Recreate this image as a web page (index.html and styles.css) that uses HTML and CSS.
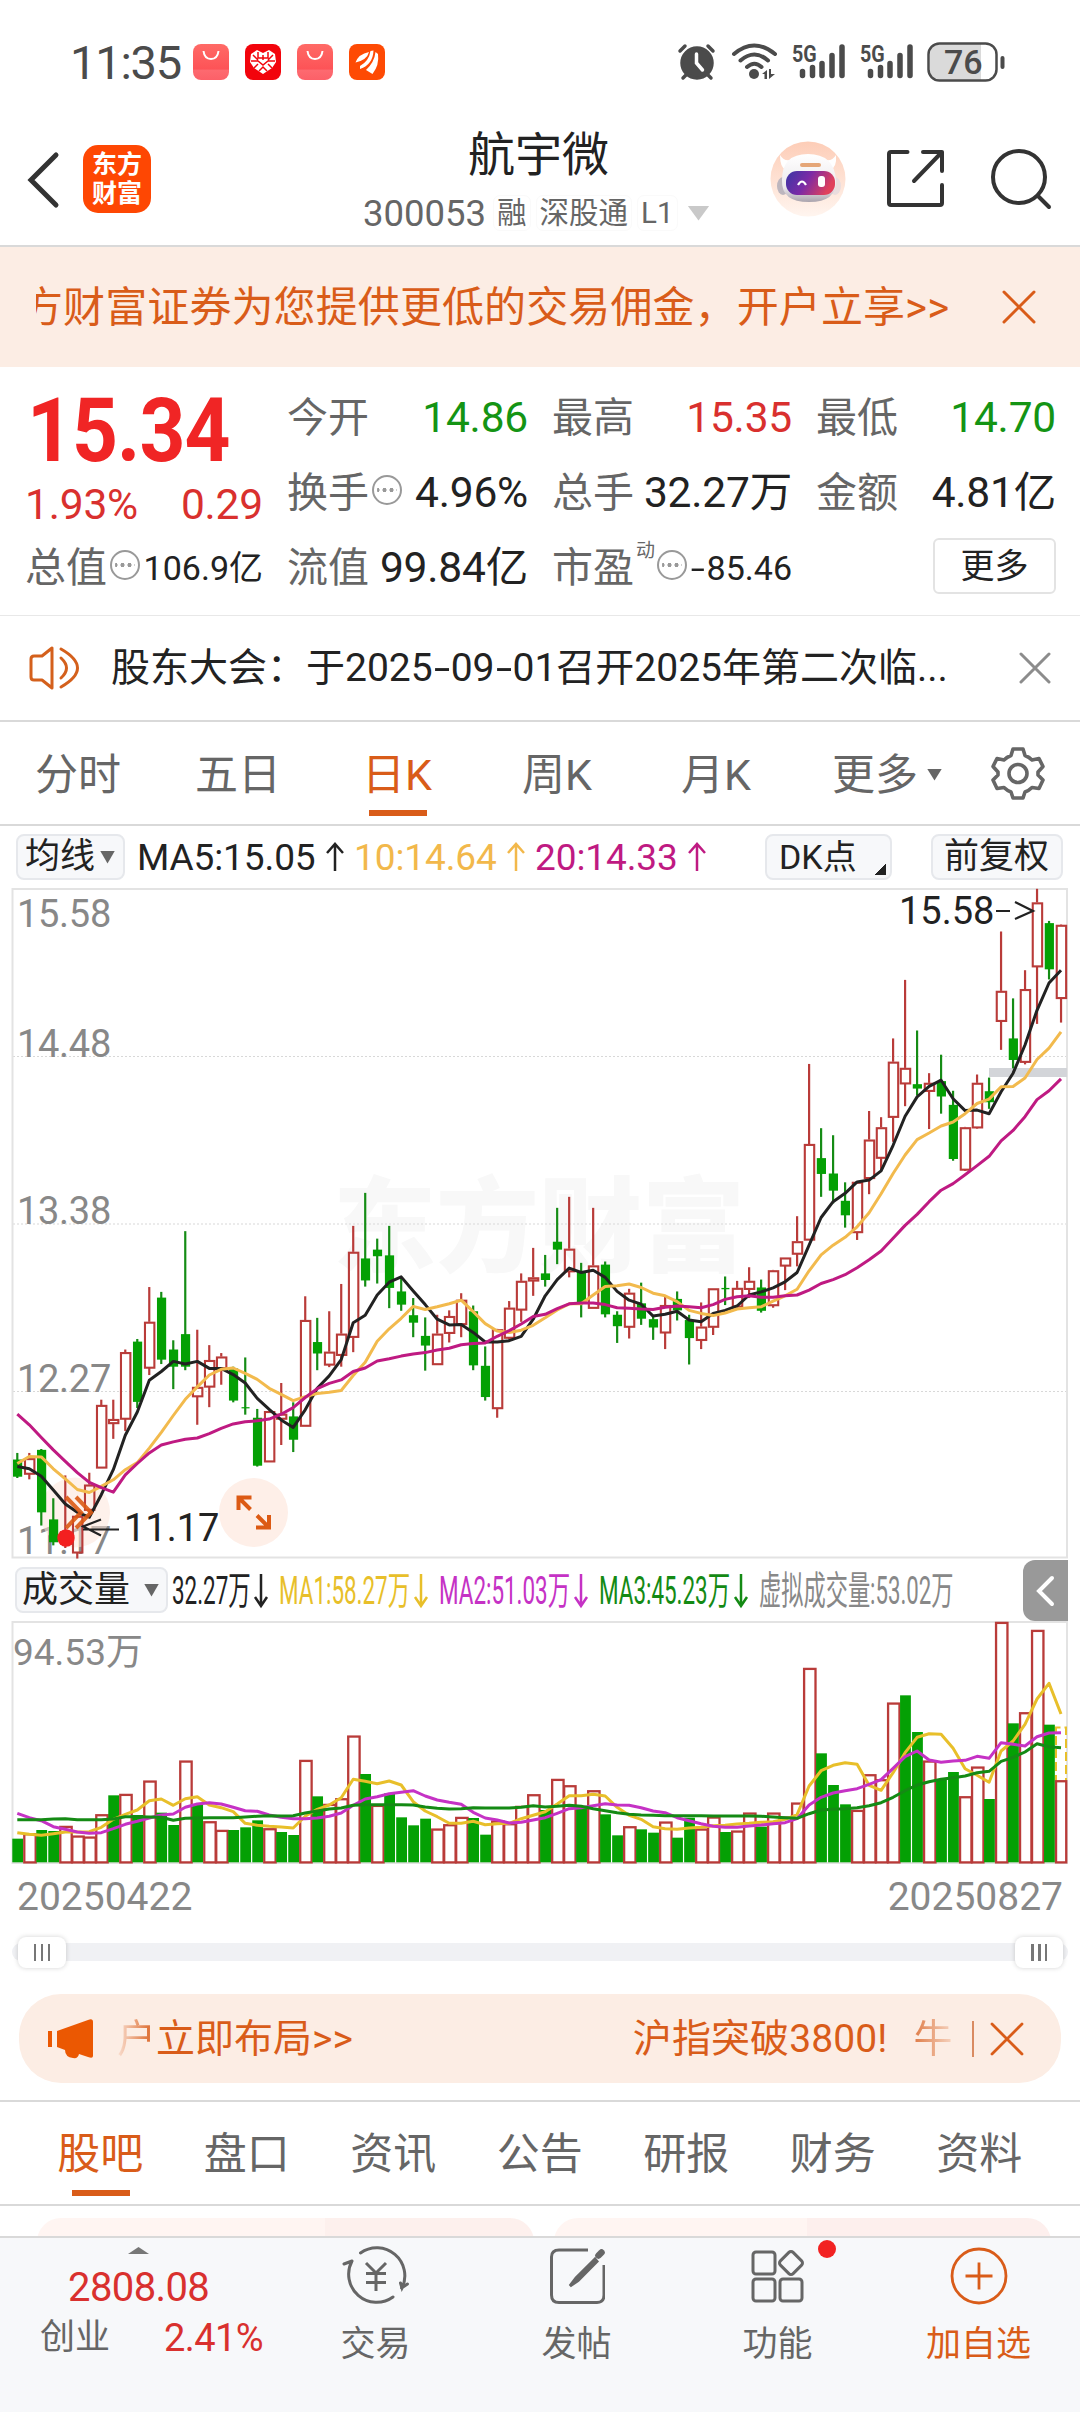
FILE: index.html
```html
<!DOCTYPE html>
<html lang="zh-CN">
<head>
<meta charset="utf-8">
<title>航宇微 300053</title>
<link rel="stylesheet" href="styles.css">
</head>
<body>
<main class="app">
  <div class="status">
    <span class="clock">11:35</span>
    <svg class="status-apps" width="194" height="36" viewBox="0 0 194 36">
      <defs><linearGradient id="bag" x1="0" y1="0" x2="0" y2="1"><stop offset="0" stop-color="#ff6a66"/><stop offset=".7" stop-color="#fd5357"/><stop offset=".72" stop-color="#fd6a70"/><stop offset="1" stop-color="#fc6068"/></linearGradient></defs>
      <rect width="36" height="36" rx="8" fill="url(#bag)"/><path d="M10.500 7q1 8 7.500 8t7.500-8" fill="none" stroke="#fff" stroke-width="2"/>
      <rect x="52" width="36" height="36" rx="8" fill="#f2040c"/>
      <path d="M70 9l6-3 6 4 1 8-4 6-9 6-9-6-4-6 1-8 6-4z" fill="#fff"/>
      <path d="M60 11l5 5M65 8v6h5M75 8v6h-5M80 11l-5 5M58 17h7l5 4 5-4h7M61 24l4-4M79 24l-4-4M66 27l4-4 4 4M70 11v5" fill="none" stroke="#f2040c" stroke-width="1.500"/>
      <rect x="104" width="36" height="36" rx="8" fill="url(#bag)"/><path d="M114.500 7q1 8 7.500 8t7.500-8" fill="none" stroke="#fff" stroke-width="2"/>
      <rect x="156" width="36" height="36" rx="8" fill="#fe4a04"/>
      <path d="M162.500 18.500q3-8.500 13.500-10.500-2 8-13.500 10.500zM167 22q9-5 10.500-15l3-.5q-.500 14-13.500 18.500zM173 26q8.500-8 9.500-18l2.500 2q1.500 11-5.500 20z" fill="#fff"/>
    </svg>
    <svg class="status-system" width="334" height="40" viewBox="0 0 334 40" fill="none" stroke="#4b4b4b">
      <g stroke="#4b4b4b" stroke-width="3.500" stroke-linecap="round">
        <circle cx="21" cy="21" r="15" fill="#4b4b4b"/>
        <path d="M4 9l5-5M37 9l-5-5M7 36l4-4M35 36l-4-4"/>
        <path d="M20.500 12v9l6 7" stroke="#fff"/>
      </g>
      <g stroke-width="4" stroke-linecap="round"><path d="M58 12q20-17 41 0M64.500 18.500q14-12 27.500 0M71 25q7.500-6.500 14.500 0"/></g>
      <circle cx="78" cy="32" r="5" fill="#4b4b4b" stroke="none"/>
      <path d="M86 32l5-4v9h-2.500v-5zM93 27v10l6-5h-4v-5z" fill="#4b4b4b" stroke="none"/>
      <g stroke-width="5.500" stroke-linecap="round"><path d="M126.500 29.500v4M136.500 25.500v8M146 21.500v12M156 13.500v20M166 5v28.500"/></g>
      <g stroke-width="5.500" stroke-linecap="round"><path d="M194.500 29.500v4M204.500 25.500v8M214 21.500v12M224 13.500v20M234 5v28.500"/></g>
      <g fill="#4b4b4b" stroke="none" class="net"><text transform="translate(116 19.500) scale(.82 1)">5G</text><text transform="translate(184 19.500) scale(.82 1)">5G</text></g>
      <path d="M264 2h41v36h-41q-10 0-10-10v-16q0-10 10-10z" fill="#dadada" stroke="none"/>
      <rect x="252.500" y="1.500" width="68" height="37" rx="11" stroke-width="2.500"/>
      <path d="M326.500 16v9" stroke-width="4" stroke-linecap="round"/>
      <text x="268" y="32" class="charge">76</text>
    </svg>
  </div>

  <header class="header">
    <svg class="back" width="36" height="58" viewBox="0 0 36 58" fill="none" stroke="#333" stroke-width="5" stroke-linecap="round"><path d="M31 4L6 29l25 25"/></svg>
    <div class="logo"><span>东方</span><span>财富</span></div>
    <div class="stock">
      <h1>航宇微</h1>
      <div class="stock-meta"><span class="code">300053</span><span class="tag">融</span><span class="tag">深股通</span><span class="tag">L1</span><i class="caret"></i></div>
    </div>
    <svg class="avatar" width="76" height="76" viewBox="0 0 76 76">
      <defs>
        <linearGradient id="halo" x1="0" y1="0" x2="0" y2="1"><stop offset="0" stop-color="#fdcdb7"/><stop offset="1" stop-color="#fff5ef"/></linearGradient>
        <linearGradient id="shell" x1="0" y1="0" x2="0" y2="1"><stop offset="0" stop-color="#fff"/><stop offset=".7" stop-color="#ece9ec"/><stop offset="1" stop-color="#aaa3ad"/></linearGradient>
        <linearGradient id="visor" x1="0" y1="0" x2="1" y2=".3"><stop offset="0" stop-color="#3a35a5"/><stop offset=".5" stop-color="#7b2aa6"/><stop offset="1" stop-color="#e0405c"/></linearGradient>
      </defs>
      <circle cx="38" cy="38" r="37.500" fill="url(#halo)"/>
      <path d="M10 14q5 8 13 4l-7 11q-6-2-6-15zM66 14q-5 8-13 4l7 11q7-2 6-15z" fill="#fff"/>
      <ellipse cx="13" cy="45" rx="6" ry="9" fill="#bdb6be"/><ellipse cx="65" cy="45" rx="6" ry="9" fill="#eaddde"/>
      <path d="M38 13q26 0 28 26 1 22-27 22T12 39q0-26 26-26z" fill="url(#shell)"/>
      <rect x="30" y="22" width="21" height="4" rx="2" fill="#e5a678"/>
      <rect x="16" y="30" width="49" height="24" rx="11" fill="url(#visor)"/>
      <path d="M28 44q4-7 8 0" fill="none" stroke="#fff" stroke-width="2.200"/><rect x="48" y="35" width="7" height="11" rx="3" fill="#fff"/>
    </svg>
    <svg class="share" width="60" height="60" viewBox="0 0 60 60" fill="none" stroke="#333" stroke-width="4" stroke-linecap="round" stroke-linejoin="round"><path d="M21.500 3H5q-2 0-2 2v49q0 2 2 2h49q2 0 2-2V36M37 3h19v19M56 3L28 32"/></svg>
    <svg class="search" width="62" height="62" viewBox="0 0 62 62" fill="none" stroke="#333" stroke-width="4" stroke-linecap="round"><circle cx="29" cy="29" r="26"/><path d="M48 48l11 11"/></svg>
  </header>

  <div class="banner">
    <div class="banner-text"><span>方财富证券为您提供更低的交易佣金，开户立享&gt;&gt;</span></div>
    <svg width="34" height="34" viewBox="0 0 34 34" stroke="#d95c19" stroke-width="3" stroke-linecap="round"><path d="M2 2l30 30M32 2L2 32"/></svg>
  </div>

  <section class="quote">
    <div class="price-cell"><span class="price">15.34</span></div>
    <div class="cell"><span>今开</span><b class="green">14.86</b></div>
    <div class="cell"><span>最高</span><b class="red">15.35</b></div>
    <div class="cell"><span>最低</span><b class="green">14.70</b></div>

    <div class="cell change"><b class="red">1.93%</b><b class="red">0.29</b></div>
    <div class="cell"><span>换手</span><i class="info"></i><b>4.96%</b></div>
    <div class="cell"><span>总手</span><b>32.27万</b></div>
    <div class="cell"><span>金额</span><b>4.81亿</b></div>

    <div class="cell"><span>总值</span><i class="info"></i><b class="small">106.9亿</b></div>
    <div class="cell"><span>流值</span><b>99.84亿</b></div>
    <div class="cell"><span>市盈<sup>动</sup></span><i class="info dyn"></i><b class="small"><u>-</u>85.46</b></div>
    <div class="cell"><button class="more">更多</button></div>
  </section>

  <div class="notice">
    <svg width="52" height="46" viewBox="0 0 52 46" fill="none" stroke="#d4601c" stroke-width="3" stroke-linejoin="round" stroke-linecap="round"><path d="M23 3v40l-10-8H5q-3 0-3-3V14q0-3 3-3h8z"/><path d="M32 13q11 10 0 20M32 4q33 19 0 38"/></svg>
    <p>股东大会：于2025<u>-</u>09<u>-</u>01召开2025年第二次临...</p>
    <svg width="32" height="32" viewBox="0 0 32 32" stroke="#8c8c8c" stroke-width="3" stroke-linecap="round"><path d="M2 2l28 28M30 2L2 30"/></svg>
  </div>

  <nav class="periods">
    <a>分时</a><a>五日</a><a class="active">日K</a><a>周K</a><a>月K</a><a>更多<i class="caret dark"></i></a>
    <svg width="54" height="54" viewBox="0 0 54 54" fill="none" stroke="#666" stroke-width="3.600" stroke-linejoin="round"><path d="M22 3h10l2 6.500q4 1.500 7 4.500l7-1.500 4 8-5 5.500v3l5 5-4 8.500-7-1q-3 3-7 4.500L32 52H22l-2-6q-4-1.500-7-4.500l-7 1L2 34l5-5v-3l-5-5.500 4-8 7 1.500q3-3 7-4.500z"/><circle cx="27" cy="27.500" r="9"/></svg>
  </nav>

  <div class="averages">
    <button class="chip ma">均线<i class="caret dark"></i></button>
    <span class="avg">MA5:15.05<svg width="20" height="30" viewBox="0 0 20 30"><path d="M10 29V2M2 11l8-9 8 9"/></svg></span>
    <span class="avg yellow">10:14.64<svg width="20" height="30" viewBox="0 0 20 30"><path d="M10 29V2M2 11l8-9 8 9"/></svg></span>
    <span class="avg pink">20:14.33<svg width="20" height="30" viewBox="0 0 20 30"><path d="M10 29V2M2 11l8-9 8 9"/></svg></span>
    <button class="chip dk">DK点</button>
    <button class="chip adj">前复权</button>
  </div>

  <svg class="chart" id="price" width="1080" height="671" viewBox="0 888 1080 671">
    <text class="watermark" x="333" y="1264">东方财富</text>
    <path class="grid" d="M13 1056.500H1067M13 1224H1067M13 1391.500H1067"/>
    <path class="frame" d="M12.500 889H1067V1557.500H12.500z"/>
    <g class="scale"><text x="17" y="927">15.58</text><text x="17" y="1057">14.48</text><text x="17" y="1224">13.38</text><text x="17" y="1392">12.27</text><text x="17" y="1554">11.17</text></g>
    <rect x="989" y="1068" width="78" height="9" fill="#d3d5d9"/>
    <circle cx="75" cy="1512.500" r="35" fill="#fde6db" opacity=".55"/>
    <g id="candles"></g>
    <g id="price-lines"></g>
    <circle cx="66" cy="1538" r="8.700" fill="#f32020"/>
    <path class="hint" d="M66 1497l15 15.500-15 15.500M76 1497l15 15.500-15 15.500" stroke-opacity=".9"/>
    <path d="M119 1529.500H83M101 1519.500l-18 7 18 9" fill="none" stroke="#222" stroke-width="2.200"/>
    <text class="mark" x="124" y="1540.500">11.17</text>
    <text class="mark" x="899" y="924">15.58</text>
    <path d="M996 911h14M1015 902l18 9-18 8" fill="none" stroke="#222" stroke-width="2.200"/>
    <circle cx="253.500" cy="1512.500" r="34.500" fill="#feefe8"/>
    <path class="hint" d="M238.500 1510v-12.500h13M238.500 1497.500l12 12M269 1515v12.500h-13M269 1527.500l-12-12"/>
  </svg>

  <div class="volume-bar">
    <button class="chip vol">成交量<i class="caret dark"></i></button>
    <svg class="volume-legend" width="790" height="50" viewBox="0 0 790 50">
      <g fill="#222" stroke="#222"><text transform="translate(3 39) scale(.575 1)">32.27万</text><path d="M92 9v32M86 32l6 9 6-9"/></g>
      <g fill="#e8bf2a" stroke="#e8bf2a"><text transform="translate(110 39) scale(.575 1)">MA1:58.27万</text><path d="M252 9v32M246 32l6 9 6-9"/></g>
      <g fill="#c532c5" stroke="#c532c5"><text transform="translate(270 39) scale(.575 1)">MA2:51.03万</text><path d="M412 9v32M406 32l6 9 6-9"/></g>
      <g fill="#148a14" stroke="#148a14"><text transform="translate(430 39) scale(.575 1)">MA3:45.23万</text><path d="M572 9v32M566 32l6 9 6-9"/></g>
      <g fill="#888"><text transform="translate(590 39) scale(.57 1)">虚拟成交量:53.02万</text></g>
    </svg>
    <button class="collapse"><svg width="45" height="61" viewBox="0 0 45 61" fill="none" stroke="#fff" stroke-width="4" stroke-linecap="round"><path d="M29 18L16 31l13 13"/></svg></button>
  </div>

  <svg class="chart" id="volume" width="1080" height="243" viewBox="0 1621 1080 243">
    <path class="frame" d="M12.500 1622H1067V1863H12.500z"/>
    <text class="volume-max" x="13" y="1665">94.53万</text>
    <g id="bars-volume"></g>
    <path d="M1056 1862V1727.500H1066V1862" fill="none" stroke="#e8bf2a" stroke-width="2" stroke-dasharray="9 4"/>
    <g id="volume-last"></g>
    <g id="volume-lines"></g>
  </svg>

  <div class="dates"><span>20250422</span><span>20250827</span></div>
  <div class="range"><i class="handle"></i><i class="handle"></i></div>

  <div class="promo">
    <svg width="46" height="40" viewBox="0 0 46 40" fill="#eb5802"><path d="M0 12h4v16H0zM9 12L40 1q5-2 5 2v34q0 3-5 1l-9-3q-1 5-6 4-8-1-8-8l-8-3z"/></svg>
    <div class="ticker"><span class="fade-left">户</span><span>立即布局&gt;&gt;</span><span class="next">沪指突破3800!</span><span class="fade-right">牛</span></div>
    <i class="bar"></i>
    <svg width="34" height="34" viewBox="0 0 34 34" stroke="#d95c19" stroke-width="2.800" stroke-linecap="round"><path d="M2 2l30 30M32 2L2 32"/></svg>
  </div>

  <nav class="sections"><a class="active">股吧</a><a>盘口</a><a>资讯</a><a>公告</a><a>研报</a><a>财务</a><a>资料</a></nav>
  <div class="cards"><i></i><i></i></div>

  <footer class="bottom">
    <div class="index"><i class="up"></i><b>2808.08</b><div><span>创业</span><em>2.41%</em></div></div>
    <a><svg width="68" height="60" viewBox="0 0 68 60" fill="none" stroke="#666" stroke-width="3" stroke-linecap="round"><path d="M18.500 7a28 28 0 0 1 41.500 35l-1.500-5M59.500 42l6-4M51 51A28 28 0 0 1 10 15M2 18l8-3"/><path d="M24 17l10 10 10-10M24 27.500h20M24 36.500h20M34 27v18" stroke-linecap="butt"/></svg>交易</a>
    <a><svg width="56" height="60" viewBox="0 0 56 60" fill="none" stroke="#666" stroke-width="3"><path d="M39 4H10Q2.500 4 2.500 11v38q0 7.500 7.500 7.500h38q7 0 7-7.500V19"/><path d="M46 13L27 32l-6 8 8-5.500 19-19z" fill="#666"/><path d="M49.500 9.500l3-3" stroke-width="6.500" stroke-linecap="round"/></svg>发帖</a>
    <a class="dotted"><svg width="56" height="60" viewBox="0 0 56 60" fill="none" stroke="#666" stroke-width="3"><rect x="3" y="6" width="22" height="22" rx="3"/><rect x="3" y="33" width="22" height="22" rx="3"/><rect x="30" y="33" width="22" height="22" rx="3"/><rect x="32" y="8" width="18" height="18" rx="3" transform="rotate(45 41 17)"/></svg>功能</a>
    <a class="active"><svg width="60" height="60" viewBox="0 0 60 60" fill="none" stroke="#d95c19" stroke-width="2.800"><circle cx="30" cy="30" r="27"/><path d="M30 16.500v27M16.500 30h27"/></svg>加自选</a>
  </footer>
</main>
<script src="chart.js"></script>
</body>
</html>
```
FILE: styles.css
```css
* { box-sizing: border-box; }
body { margin: 0; background: #fff; color: #222; font-family: Roboto, "Noto Sans CJK SC", sans-serif; }
h1, p { margin: 0; font-weight: 400; }
b, i, em, u { font-weight: 400; font-style: normal; text-decoration: none; }
button { font: inherit; color: inherit; padding: 0; border: 0; }
svg { display: block; flex: none; }
.app { width: 1080px; height: 2412px; overflow: hidden; display: flex; flex-direction: column; }
.app > * { flex: none; }
.caret { display: block; width: 22px; height: 15px; background: #c9c9c9; clip-path: polygon(0 0, 100% 0, 50% 100%); }
.caret.dark { width: 15px; height: 13px; background: #666; }

.status { height: 125px; display: flex; align-items: flex-start; padding: 0 70px 0 70px; }
.clock { width: 123px; margin-top: 35px; line-height: 56px; font-size: 47px; letter-spacing: -1.200px; color: #4b4b4b; }
.status-apps { margin-top: 44px; }
.status-system { margin: 42px 0 0 auto; }
.net { font-weight: 700; font-size: 24px; }
.charge { font-weight: 500; font-size: 34px; fill: #4b4b4b; stroke: none; }

.header { height: 122px; border-bottom: 2px solid #d9d9d9; display: grid; grid-template-columns: 83px 68px 619px 116px 104px auto; }
.back { margin: 26px 0 0 25px; }
.logo { width: 68px; height: 68px; margin-top: 20px; border-radius: 15px; background: #fe4703; color: #fff; font-size: 25px; font-weight: 700; line-height: 29px; display: flex; flex-direction: column; align-items: center; justify-content: center; }
.stock { padding-left: 212px; }
.stock h1 { margin: -2px 0 0 105px; font-size: 47px; line-height: 64px; }
.stock-meta { display: flex; align-items: center; height: 40px; margin-top: 6px; color: #666; white-space: nowrap; }
.code { font-size: 36.500px; width: 130px; }
.tag { font-size: 29.500px; line-height: 34px; padding: 0 3px; margin-right: 5px; border-radius: 7px; border: 1px solid #fafafa; }
.stock-meta .caret { margin-left: 5px; }
.avatar { margin-top: 16px; }
.share { margin-top: 24px; }
.search { margin-top: 23px; }

.banner { height: 120px; background: #fcede4; display: flex; align-items: center; padding: 0 44px 0 36px; color: #d95c19; }
.banner-text { flex: 1; overflow: hidden; white-space: nowrap; font-size: 42px; line-height: 70px; letter-spacing: .1px; padding-top: 2px; }
.banner-text span { display: block; margin-left: -15px; }

.quote { height: 249px; border-bottom: 1px solid #e8e8e8; display: grid; grid-template-columns: 236px 239px 238px 238px; column-gap: 26px; grid-template-rows: 75px 75px 75px; padding: 13px 0 0 27px; }
.cell { display: flex; align-items: center; font-size: 41px; line-height: 60px; white-space: nowrap; color: #666; }
.cell span { margin-left: -2px; }
.cell b { margin-left: auto; letter-spacing: -.2px; font-size: 42.500px; color: #222; }
.cell b.red { color: #d9302e; }
.cell b.green { color: #149414; }
.cell b.small { font-size: 34px; letter-spacing: 0; }
.cell u { display: inline-block; transform: scaleX(1.500); width: 13px; }
.change { padding-top: 24px; }
.change b:first-child { margin-left: -2px; }
.price { display: block; font-size: 89px; font-weight: 700; color: #f02525; line-height: 100px; transform: scaleX(.9); transform-origin: 0 0; margin-top: 1px; letter-spacing: -1px; }
.info { width: 30px; height: 30px; border: 2px solid #999; border-radius: 50%; margin: -6px 0 0 3px; background: radial-gradient(circle, #999 1.8px, transparent 2.3px) 0 0 / 7px 100%; background-clip: content-box; padding: 0 3px; }
.cell sup { font-size: 19px; line-height: 20px; display: inline-block; vertical-align: 25px; margin-left: 2px; }
.info.dyn { margin-left: 2px; }
.more { width: 125px; height: 56px; margin-left: 115px; margin-top: -3px; border: 2px solid #e3e3e3; border-radius: 6px; background: #fff; color: #222; font-size: 34px; line-height: 50px; }

.notice { height: 106px; border-bottom: 2px solid #d9d9d9; display: flex; align-items: center; padding: 0 29px; }
.notice p { margin-left: 30px; font-size: 39px; line-height: 60px; white-space: nowrap; }
.notice u { display: inline-block; width: 18px; text-align: center; transform: scaleX(1.5); }
.notice svg:last-child { margin-left: auto; }

.periods { height: 104px; border-bottom: 2px solid #d9d9d9; display: flex; align-items: center; padding-left: 35px; color: #666; font-size: 43px; line-height: 102px; }
.periods a { height: 102px; padding-top: 3px; display: flex; align-items: center; }
.periods a:nth-child(1) { width: 160px; }
.periods a:nth-child(2) { width: 167px; }
.periods a:nth-child(3) { width: 160px; }
.periods a:nth-child(4) { width: 159px; }
.periods a:nth-child(5) { width: 151px; }
.periods a:nth-child(6) { width: 159px; }
.periods a.active { color: #d95c19; background: linear-gradient(#d95c19, #d95c19) 7px 88px / 58px 6px no-repeat; }
.periods .caret { margin-left: 9px; width: 15px; height: 12px; }

.averages { height: 62px; display: flex; align-items: center; padding-left: 16px; font-size: 37px; white-space: nowrap; }
.chip { display: flex; align-items: center; height: 46px; border: 2px solid #e6e8ec; border-radius: 8px; background: #f7f8fa; font-size: 35px; line-height: 42px; color: #222; }
.chip.ma { width: 109px; padding-left: 7px; margin-right: 12px; }
.chip .caret { margin-left: 5px; }
.avg { display: flex; align-items: center; letter-spacing: -.1px; width: 217px; }
.avg svg { margin-left: 9px; fill: none; stroke: #222; stroke-width: 2.500; }
.avg.yellow { color: #f2b84b; width: 181px; }
.avg.yellow svg { stroke: #f2b84b; }
.avg.pink { color: #bf1a82; width: 230px; }
.avg.pink svg { stroke: #bf1a82; }
.chip.dk { width: 127px; padding-left: 12px; font-size: 34px; background: linear-gradient(135deg, transparent 50%, #222 52%) 107px 27px / 12px 12px no-repeat, #f7f8fa; }
.chip.adj { width: 132px; margin-left: 39px; padding-left: 11px; }

.chart text { font-family: Roboto, "Noto Sans CJK SC", sans-serif; }
.frame { fill: none; stroke: #e3e3e3; stroke-width: 2; }
.grid { fill: none; stroke: #d8d8d8; stroke-width: 1.200; stroke-dasharray: 2 2; }
.chart .watermark { font: 900 103px "Noto Sans CJK SC", sans-serif; fill: #f8f8f8; }
.scale { font-size: 38px; fill: #888; letter-spacing: -.3px; }
.mark { font-size: 38px; fill: #222; }
.hint { fill: none; stroke: #dc5a14; stroke-width: 4; }
.volume-max { font-size: 37px; fill: #888; }
.line { fill: none; stroke-width: 3; stroke-linejoin: round; }
.up-bar { fill: #fff; stroke: #b93b39; stroke-width: 2.300; }
.up-body { fill: none; stroke: #b93b39; stroke-width: 2.100; }
.down-bar { fill: #04a004; }

.volume-bar { height: 62px; display: flex; padding-left: 15px; }
.chip.vol { width: 153px; margin-top: 8px; padding-left: 5px; font-size: 36px; }
.chip.vol .caret { margin-left: 14px; }
.volume-legend { margin: 6px 0 0 1px; }
.volume-legend g { stroke-width: 2.500; }
.volume-legend text { font-size: 39px; stroke: none; }
.volume-legend path { fill: none; }
.collapse { width: 45px; height: 61px; margin: 1px 12px 0 auto; background: #999; border-radius: 12px 0 0 12px; }

.dates { height: 70px; display: flex; justify-content: space-between; padding: 3px 17px 0 17px; font-size: 39px; line-height: 60px; color: #888; }
.range { height: 18px; margin: 9px 12px 0; border-radius: 9px; background: #f0f1f4; display: flex; align-items: center; justify-content: space-between; padding: 0 5px 0 6px; }
.handle { width: 48px; height: 31px; border-radius: 8px; background: repeating-linear-gradient(90deg, #777 0 2.500px, transparent 2.500px 7px) 16px 7px / 17px 17px no-repeat, #fff; box-shadow: 0 0 5px rgba(0, 0, 0, .18); }
.promo { height: 89px; margin: 33px 19px 0; border-radius: 42px; background: #fcede4; display: flex; align-items: center; padding: 0 37px 0 29px; color: #d95c19; }
.ticker { flex: 1; display: flex; font-size: 39px; line-height: 60px; margin-left: 23px; white-space: nowrap; }
.fade-left { background: linear-gradient(90deg, #fae0d2, #d95c19); -webkit-background-clip: text; color: transparent; }
.next { margin-left: 280px; letter-spacing: .1px; }
.fade-right { margin-left: 26px; background: linear-gradient(90deg, #de7a45, #f6d3bf); -webkit-background-clip: text; color: transparent; }
.bar { width: 2px; height: 36px; background: #d98b62; margin-right: 16px; }

.sections { height: 106px; margin-top: 17px; border-top: 2px solid #d9d9d9; border-bottom: 2px solid #d9d9d9; display: flex; padding-left: 27px; font-size: 43px; line-height: 105px; color: #666; }
.sections a { width: 146.500px; text-align: center; }
.sections a.active { color: #d95c19; background: linear-gradient(#d95c19, #d95c19) 45px 88px / 58px 6px no-repeat; }
.cards { height: 30px; padding: 12px 29px 0 37px; display: flex; gap: 20px; overflow: hidden; }
.cards i { width: 497px; height: 60px; border-radius: 24px; background: linear-gradient(90deg, #fff5f2 0 58%, #fdf0ed 58%); }
.cards i + i { background: linear-gradient(90deg, #fff5f2 0 51%, #fdefed 51%); }

.bottom { height: 177px; border-top: 2px solid #d9d9d9; background: #f7f8fa; display: grid; grid-template-columns: 275px repeat(4, 201px); font-size: 35px; line-height: 50px; color: #666; }
.bottom a { display: flex; flex-direction: column; align-items: center; padding-top: 8px; gap: 14px; position: relative; }
.bottom a.active { color: #d95c19; }
.dotted::after { content: ""; position: absolute; left: 141px; top: 2px; width: 18px; height: 18px; border-radius: 50%; background: #f22222; }
.index { color: #d9302e; }
.up { display: block; width: 21px; height: 7px; margin: 9px 0 0 128px; background: #777; clip-path: polygon(50% 0, 100% 100%, 0 100%); }
.index b { display: block; margin: 9px 0 0 68px; font-size: 40px; line-height: 50px; letter-spacing: -.6px; }
.index div { display: flex; justify-content: space-between; padding: 0 12px 0 40px; }
.index span { color: #666; }
.index em { font-size: 38px; letter-spacing: -.6px; }
```
FILE: chart.js
```js
// Price series are kept in chart units below the top edge; UNIT turns one unit into pixels.
const STEP = 11.997, FIRST = 17.3, TOP = 880, UNIT = 1 / 2.2725;
const px = i => FIRST + STEP * i;
const py = v => TOP + v * UNIT;
const vy = v => 1550 + v / 3;

// direction, high, body top, body bottom, low
const candles = `G 1302 1317 1356 1359|R 1302 1314 1350 1362|G 1293 1295 1437 1467|G 1405 1453 1505 1512|R 1353 1480 1505 1518|R 1443 1445 1529 1542|R 1347 1374 1432 1450|R 1181 1193 1336 1336|R 1181 1225 1235 1270|R 1067 1073 1225 1252|G 1043 1049 1186 1200|R 925 1004 1109 1125|G 936 949 1090 1100|G 1046 1067 1106 1157|G 798 1032 1106 1114|R 1022 1152 1174 1238|R 1057 1091 1152 1198|R 1075 1083 1110 1147|G 1106 1110 1183 1187|G 1085 1198 1200 1215|G 1202 1222 1331 1333|R 1206 1207 1322 1322|R 1143 1213 1225 1284|G 1187 1219 1272 1300|R 946 1000 1241 1241|G 995 1050 1076 1114|R 980 1072 1102 1107|R 918 1031 1080 1106|R 786 845 1039 1073|G 711 860 910 924|G 815 840 855 917|G 786 853 927 973|G 905 935 965 979|G 950 989 1006 1039|G 994 1036 1058 1115|R 988 1031 1101 1101|R 978 991 1030 1051|R 939 954 1010 1039|G 967 980 1103 1114|G 1060 1104 1175 1183|R 1020 1021 1201 1222|R 957 972 1041 1045|R 894 911 977 1004|R 836 903 911 945|G 852 894 909 924|G 745 822 840 873|R 720 838 890 903|G 870 890 962 994|R 745 876 973 973|G 867 874 987 994|G 980 988 1014 1052|R 929 938 1016 1042|G 915 962 997 1011|G 990 998 1017 1045|R 945 966 1029 1066|G 935 952 978 1001|G 988 1000 1041 1101|R 960 1015 1046 1066|R 928 928 1016 1034|G 901 927 930 966|R 911 927 970 972|R 880 911 930 950|G 908 926 979 983|R 886 887 967 972|R 858 858 877 932|R 764 821 850 878|R 418 600 818 818|G 564 632 668 720|G 580 667 706 735|G 687 729 762 790|R 685 686 801 818|R 525 590 678 714|R 539 562 632 660|R 360 413 539 595|R 227 427 463 514|G 342 464 474 490|R 439 461 480 566|G 397 457 492 531|G 479 511 634 638|R 561 562 659 661|R 442 461 563 565|G 449 480 505 520|R 117 252 321 386|G 269 360 409 428|R 205 248 414 419|R 20 51 197 327|G 93 98 203 226|R 101 102 269 324`
  .split('|').map(s => s.split(' '));

const ma5 = [1333,1338,1355,1386,1418,1437,1448,1397,1340,1262,1209,1137,1117,1094,1100,1094,1110,1110,1124,1143,1178,1203,1227,1244,1204,1155,1127,1090,1006,989,943,914,902,934,965,998,1011,1010,1028,1050,1050,1047,1037,998,945,908,882,892,887,903,935,955,964,991,987,980,1000,1004,985,978,968,943,936,927,913,892,830,767,731,712,686,682,661,603,537,493,469,455,497,524,523,531,481,439,375,296,234,205];
const ma10 = [1326,1310,1311,1338,1361,1385,1392,1378,1363,1340,1324,1291,1255,1217,1180,1152,1125,1112,1109,1121,1135,1155,1169,1183,1174,1167,1164,1160,1126,1096,1048,1020,996,969,976,970,963,955,981,1008,1025,1028,1023,1012,995,977,963,963,943,924,922,918,926,939,945,958,978,985,990,984,975,972,970,957,945,930,888,852,830,812,788,756,713,667,625,590,575,559,550,531,508,498,470,469,450,408,382,345];
const ma20 = [1214,1238,1267,1295,1321,1347,1369,1381,1391,1352,1326,1302,1284,1277,1271,1268,1258,1246,1236,1231,1229,1225,1214,1199,1176,1156,1144,1136,1117,1109,1093,1088,1082,1077,1074,1068,1064,1056,1053,1052,1037,1024,1009,992,987,974,963,961,961,965,972,973,975,976,971,968,970,972,965,953,947,945,948,948,945,943,932,917,908,897,881,863,843,814,785,760,731,705,690,670,649,628,593,569,538,499,479,452];

const volumes = `G866 R850 G840 G843 R828 R857 R860 R793 G736 R732 G795 R692 G788 G825 R632 G765 R814 R840 G840 G832 G811 R835 G846 G855 R630 G739 R762 R745 R557 G672 R765 G730 G802 G826 G806 R836 R823 R801 G804 G854 R812 R820 R768 R733 G780 R687 R706 G770 R721 G793 G856 R829 G838 G848 R815 G863 G803 R836 R800 G846 R842 R788 G830 R788 R800 R758 R354 G610 G705 G763 R780 R673 R688 R458 G436 G546 R632 G688 G666 R739 R650 G747 R216 G520 R487 R240 G524 R691`.split(' ');
const vma1 = [848,853,856,851,846,846,845,832,808,793,780,752,747,766,746,740,765,773,785,820,826,829,831,834,799,778,765,743,688,694,701,693,705,755,783,800,820,820,814,824,821,820,806,796,785,762,737,737,733,738,772,796,808,830,836,838,834,832,827,826,822,820,817,815,808,794,708,662,646,638,643,706,721,668,608,562,551,553,595,656,676,697,603,573,523,447,400,492];
const vma2 = [790,803,812,830,838,846,850,848,836,823,814,804,795,792,772,762,758,762,772,782,784,795,802,806,806,804,799,789,766,747,740,731,727,722,738,750,757,763,787,804,810,819,817,810,803,790,776,773,767,761,765,766,773,783,788,803,812,821,829,832,832,828,825,821,818,806,765,742,729,722,716,703,689,655,620,603,630,637,633,631,619,625,578,583,588,560,549,548];
const vma3 = [809,809,809,807,806,809,809,809,807,800,800,801,802,811,805,804,803,803,803,801,799,797,798,797,789,783,777,774,766,764,764,764,764,765,771,775,777,776,773,774,774,774,772,767,771,769,766,769,776,782,788,793,795,796,797,797,797,797,798,798,798,798,799,801,803,805,791,780,778,776,773,767,758,742,722,705,695,688,683,678,668,664,634,622,606,581,590,593];

const path = (values, y, color) =>
  `<path class="line" stroke="${color}" d="M${values.map((v, i) => px(i).toFixed(1) + ' ' + y(v).toFixed(1)).join('L')}"/>`;

const wick = (x, a, b, color) =>
  b > a ? `<path d="M${x} ${a}V${b}" stroke="${color}" stroke-width="2.2"/>` : '';

document.getElementById('candles').innerHTML = candles.map(([dir, ...v], i) => {
  const [high, top, bottom, low] = v.map(n => py(+n));
  const x = px(i);
  const h = Math.max(bottom - top, 1.2);
  if (dir === 'G') {
    const w = bottom - top < 1.5 ? 8 : 9.2;
    return wick(x, high, low, '#158c15') + `<rect class="down-bar" x="${x + .3 - w / 2}" y="${top}" width="${w}" height="${h}"/>`;
  }
  return wick(x, high, top, '#b93b39') + wick(x, bottom, low, '#b93b39') +
    `<rect class="up-body" x="${x - 4.3}" y="${top + .9}" width="9.4" height="${Math.max(h - 1.2, 1)}"/>`;
}).join('');

document.getElementById('price-lines').innerHTML =
  path(ma5, py, '#222') + path(ma10, py, '#f2ba4d') + path(ma20, py, '#bf1a82');

const bar = (entry, i) => {
  const x = px(i), y = vy(+entry.slice(1));
  return entry[0] === 'G'
    ? `<rect class="down-bar" x="${x - 5}" y="${y}" width="10.8" height="${1862.3 - y}"/>`
    : `<rect class="up-bar" x="${x - 5}" y="${y + .9}" width="${i === 87 ? 10.2 : 11.4}" height="${1861.5 - y}"/>`;
};
document.getElementById('bars-volume').innerHTML = volumes.slice(0, -1).map(bar).join('');
document.getElementById('volume-last').innerHTML = bar(volumes[87], 87);
document.getElementById('volume-lines').innerHTML =
  path(vma1, vy, '#e8bf2a') + path(vma2, vy, '#c532c5') + path(vma3, vy, '#148a14');
```
